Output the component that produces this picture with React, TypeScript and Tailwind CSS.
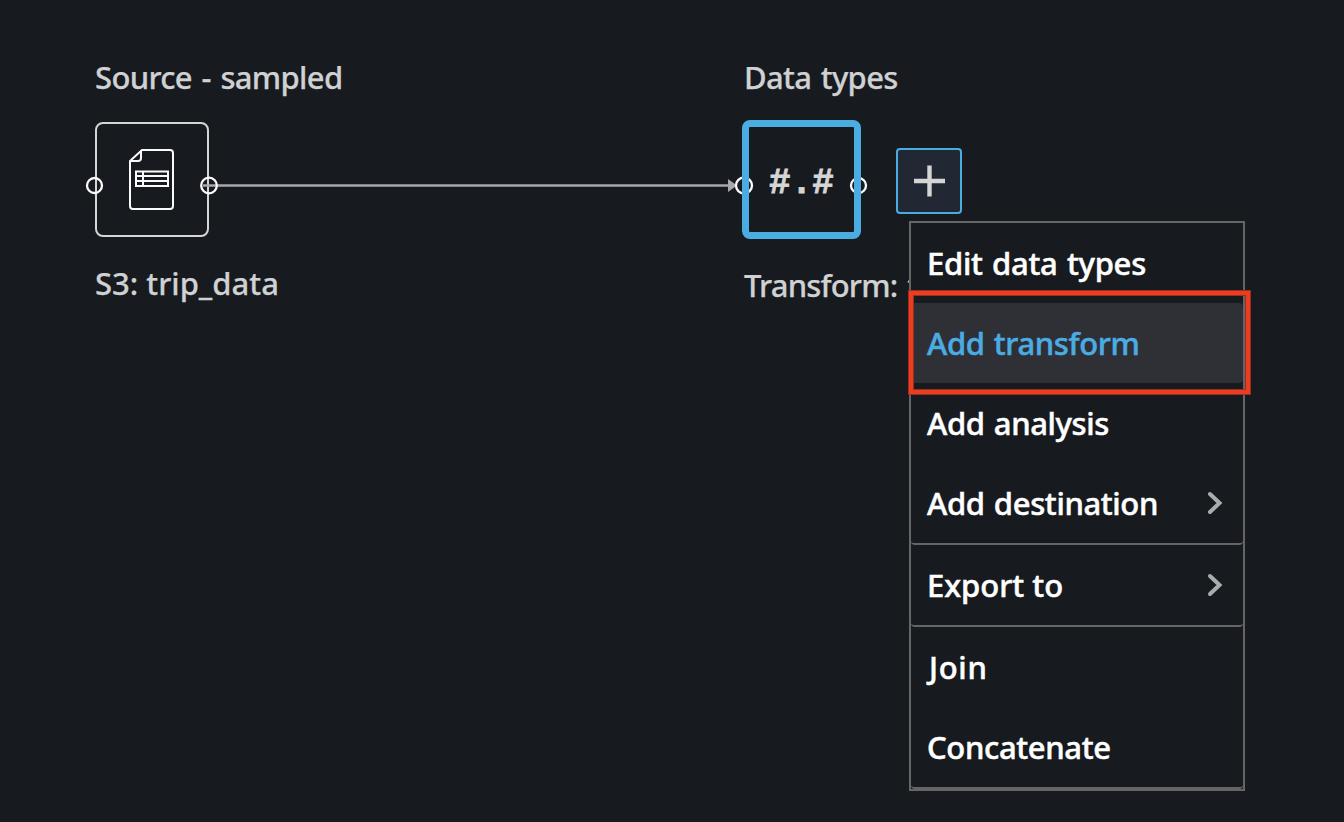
import type { ReactNode } from "react";

type Item = { label: string; text: string; submenu?: boolean; divider?: boolean; active?: boolean };

const items: Item[] = [
  { label: "Edit data types", text: "tracking-[-0.25px] [word-spacing:1.5px]" },
  { label: "Add transform", text: "tracking-[-0.38px] [word-spacing:1.5px]", active: true },
  { label: "Add analysis", text: "tracking-[-0.38px] [word-spacing:1.5px]" },
  { label: "Add destination", text: "tracking-[-0.36px] [word-spacing:1.5px]", submenu: true, divider: true },
  { label: "Export to", text: "tracking-[0px]", submenu: true, divider: true },
  { label: "Join", text: "pl-0.5 tracking-[0.7px]" },
  { label: "Concatenate", text: "tracking-[-0.35px]", divider: true },
];

function Label({ className, children }: { className: string; children: ReactNode }) {
  return (
    <div
      className={`h-10 whitespace-nowrap text-[31px] leading-[38px] font-medium text-[#d0d1d3] [-webkit-text-stroke:0.25px] ${className}`}
    >
      {children}
    </div>
  );
}

function FileIcon() {
  return (
    <svg width="48" height="64" viewBox="0 0 48 64" fill="none" stroke="#fafafa" strokeWidth="2">
      <path d="M14 2H42Q45 2 45 5V58Q45 61 42 61H5Q2 61 2 58V13Z" strokeLinejoin="round" />
      <path d="M13 2V10Q13 13 10 13H2" />
      <path d="M8 23.5H40V38H8ZM8 28H40M8 33H40M15 23V38" />
    </svg>
  );
}

function MenuItem({ label, text, submenu, divider, active }: Item) {
  return (
    <li
      className={`relative flex items-center justify-between rounded-[4px] pl-4 pr-5 text-[31px] font-medium ${
        divider ? "h-[82px] border-b-2 border-[#656565]" : "h-20"
      } ${active ? "bg-[#2f3036] text-[#4bace2]" : "text-white"}`}
    >
      <span className={`whitespace-nowrap leading-[40px] [-webkit-text-stroke:0.5px] ${text}`}>{label}</span>
      {submenu && (
        <svg className="mb-px" width="16" height="24" viewBox="0 0 16 24" fill="none" stroke="#a9abad" strokeWidth="4" strokeLinecap="round">
          <path d="M3 3L12.5 12L3 21" />
        </svg>
      )}
      {active && (
        <div className="absolute -left-[3px] -top-[13px] z-10 flex h-[105px] w-[343px] border border-[#97301f]">
          <div className="flex grow border-4 border-[#ec3d20]">
            <div className="grow border border-[#97301f]" />
          </div>
        </div>
      )}
    </li>
  );
}

export default function App() {
  return (
    <main className="relative h-[822px] w-[1344px] overflow-hidden bg-[#171a1e] font-['Noto_Sans',sans-serif]">
      <section className="absolute left-[95px] top-[58px] flex flex-col">
        <Label className="tracking-[-0.67px] [word-spacing:2.2px]">Source - sampled</Label>
        <div className="mt-6 mb-[27px] flex h-[115px] w-[114px] items-center justify-center rounded-[8px] border-2 border-[#d5d5d5] pt-px">
          <FileIcon />
        </div>
        <Label className="">S3: trip_data</Label>
      </section>

      <svg className="absolute left-0 top-0" width="900" height="240" fill="none" stroke="#fafafa" strokeWidth="2.3">
        <path d="M203 185.5H730" stroke="#a8a8ae" strokeWidth="2.5" />
        <path d="M728 179V192L737 185.5Z" fill="#a8a8ae" stroke="none" />
        <circle cx="94.5" cy="185.5" r="7.5" />
        <circle cx="209" cy="185.5" r="7.8" />
        <circle cx="744" cy="185.5" r="8" />
        <circle cx="858.5" cy="185.5" r="7.5" />
      </svg>

      <section className="absolute left-[742px] top-[58px] flex w-[220px] flex-col">
        <Label className="pl-0.5 tracking-[-0.67px] [word-spacing:2px]">Data types</Label>
        <div className="mt-[22px] mb-[27px] flex items-center gap-[35px]">
          <div className="flex h-[119px] w-[119px] items-center justify-center rounded-[8px] border-[7px] border-[#4bace2] pt-[8px] font-['Liberation_Mono',monospace] text-[36px] font-bold text-[#d5d5d5] [-webkit-text-stroke:0.8px]">
            #.#
          </div>
          <button className="mt-[3px] flex h-[66px] w-[66px] items-center justify-center rounded-[4px] border-2 border-[#4bace2] bg-[#212733]">
            <svg className="ml-px" width="32" height="32" viewBox="0 0 32 32" stroke="#d5d5d5" strokeWidth="4.4">
              <path d="M0 16H31M15.5 0.5V31.5" />
            </svg>
          </button>
        </div>
        <Label className="pl-0.5 tracking-[-0.82px] [word-spacing:3px]">Transform: t</Label>
      </section>

      <ul className="absolute left-[909px] top-[221px] w-[336px] border-2 border-[#656565] bg-[#171a1e]">
        {items.map((item) => (
          <MenuItem key={item.label} {...item} />
        ))}
      </ul>
    </main>
  );
}
